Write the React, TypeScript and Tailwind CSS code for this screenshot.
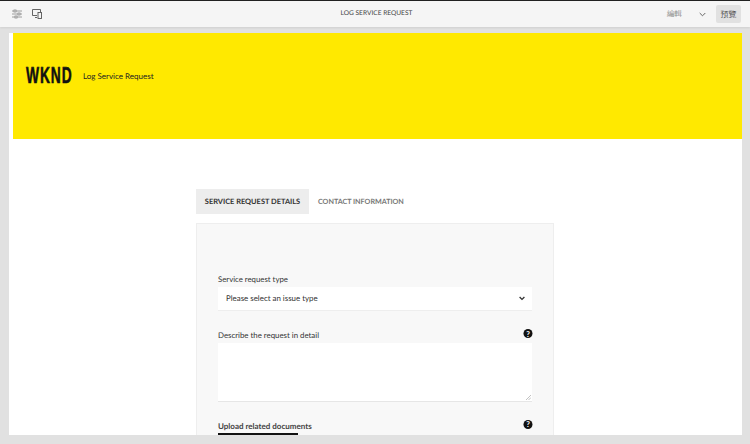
import React from "react";

const Help = () => (
  <span className="flex h-[9px] w-[9px] items-center justify-center rounded-full bg-[#111] text-[8px] leading-none font-bold text-white">?</span>
);

export default function App() {
  return (
    <div className="flex h-[444px] w-[750px] flex-col overflow-hidden bg-[#e1e1e1] font-['Lato',sans-serif] [text-rendering:geometricPrecision]">
      <div className="h-px shrink-0 bg-[#222]" />
      <header className="flex h-[26px] shrink-0 items-center justify-between bg-[#f5f5f5] pr-[9px] pl-[12px] shadow-[0_1px_2px_rgba(0,0,0,0.08)]">
        <div className="flex w-[200px] items-center gap-[11px]">
          <svg width="10" height="10" viewBox="0 0 10 10" fill="none" stroke="#888" strokeWidth="0.8">
            <path d="M0 2h10M0 5h10M0 8h10" />
            <rect x="2" y="1" width="2" height="2" fill="#f5f5f5" />
            <rect x="6" y="4" width="2" height="2" fill="#f5f5f5" />
            <rect x="3" y="7" width="2" height="2" fill="#f5f5f5" />
          </svg>
          <svg className="-ml-[1px]" width="10" height="10" viewBox="0 0 10 10" fill="none" stroke="#555" strokeWidth="0.9">
            <path d="M5 6.5H.5V.5h8v2.5" />
            <path d="M3 8.5h2" />
            <rect x="6" y="3.5" width="3.5" height="6" />
          </svg>
        </div>
        <span className="text-[6.6px] text-[#444]">LOG SERVICE REQUEST</span>
        <div className="flex w-[200px] items-center justify-end">
          <span className="text-[7.5px] text-[#888]">編輯</span>
          <svg className="ml-[17px]" width="7" height="5" viewBox="0 0 7 5" fill="none" stroke="#666" strokeWidth="1">
            <path d="M.7 1l2.8 2.8L6.3 1" />
          </svg>
          <span className="ml-[10px] flex h-[18px] w-[25px] items-center justify-center rounded-[2px] bg-[#e1e1e1] text-[8px] text-[#444]">預覽</span>
        </div>
      </header>
      <main className="mt-[6px] ml-[9px] h-[402px] w-[733px] shrink-0 overflow-hidden bg-white">
        <div className="ml-[4px] flex h-[106px] items-center bg-[#ffe900] pb-[22px] pl-[13px]">
          <span className="w-[46px] origin-left scale-x-[0.6] font-['Liberation_Sans',sans-serif] text-[23px] leading-none font-bold tracking-[1.5px] whitespace-nowrap text-[#111] [-webkit-text-stroke:0.6px_#111]">WKND</span>
          <span className="mt-[2px] ml-[11px] text-[8px] text-[#222]">Log Service Request</span>
        </div>
        <div className="mt-[50px] ml-[187px] w-[358px]">
          <div className="flex h-[25px] items-center pt-[1px]">
            <span className="-mt-[1px] flex h-[25px] w-[113px] items-center justify-center bg-[#ededed] pt-[1px] text-[7.45px] font-bold text-[#333]">SERVICE REQUEST DETAILS</span>
            <span className="ml-[9px] text-[7.15px] font-bold text-[#777]">CONTACT INFORMATION</span>
          </div>
          <div className="mt-[9px] h-[240px] border border-[#eeeeee] bg-[#f8f8f8] px-[21px] pt-[48px]">
            <label className="block text-[7.8px] leading-[15px] text-[#333]">Service request type</label>
            <div className="flex h-[24px] items-center justify-between border-b border-[#eee] bg-white pr-[7px] pl-[8px]">
              <span className="pt-[1px] text-[7.9px] text-[#333]">Please select an issue type</span>
              <svg width="6" height="5" viewBox="0 0 6 5" fill="none" stroke="#333" strokeWidth="1.3">
                <path d="M.6 1l2.4 2.4L5.4 1" />
              </svg>
            </div>
            <div className="mt-[17px] flex h-[15px] items-center justify-between">
              <label className="text-[7.85px] text-[#333]">Describe the request in detail</label>
              <div className="translate-x-[0.5px] -translate-y-[2px]"><Help /></div>
            </div>
            <div className="relative h-[59px] border-b border-[#e6e6e6] bg-white">
              <svg className="absolute right-[1px] bottom-[1px]" width="5" height="5" viewBox="0 0 5 5" stroke="#999" strokeWidth="0.6">
                <path d="M0 5l5-5M2.5 5L5 2.5" />
              </svg>
            </div>
            <div className="mt-[16px] flex h-[14px] items-center justify-between">
              <label className="pt-[1px] text-[8px] font-bold text-[#444]">Upload related documents</label>
              <div className="translate-x-[0.5px] -translate-y-[1px]"><Help /></div>
            </div>
            <div className="mt-[1px] h-[2px] w-[80px] bg-[#111]" />
          </div>
        </div>
      </main>
    </div>
  );
}
